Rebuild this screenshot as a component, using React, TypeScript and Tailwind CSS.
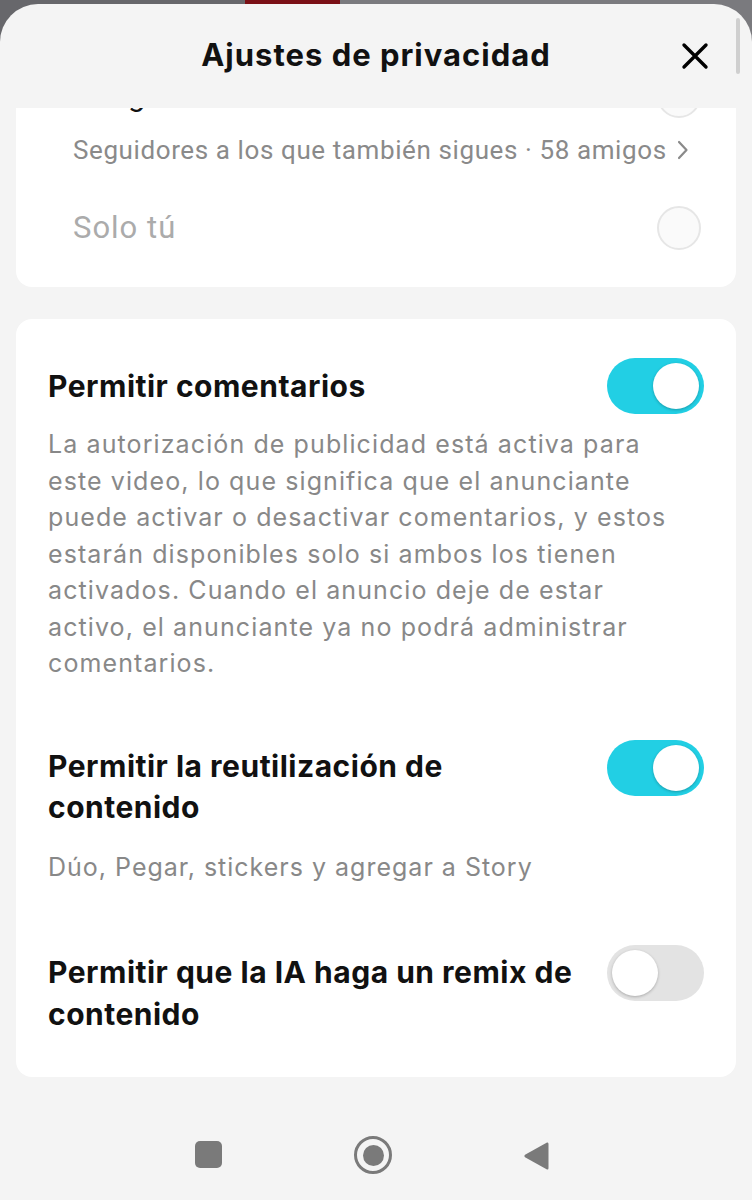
import React from "react";

const roboto = { fontFamily: "Roboto, 'Noto Sans', sans-serif" };
const inter = { fontFamily: "Inter, 'Noto Sans', sans-serif" };

function Toggle({ on }: { on: boolean }) {
  return (
    <div
      className={`shrink-0 w-[97px] h-[56px] rounded-full flex items-center px-[5px] ${
        on ? "bg-[#22cfe4] justify-end" : "bg-[#e3e3e3] justify-start"
      }`}
    >
      <div className="w-[46px] h-[46px] rounded-full bg-white shadow-[0_1px_3px_rgba(0,0,0,0.25)]" />
    </div>
  );
}

function Radio() {
  return (
    <div className="shrink-0 w-[44px] h-[44px] rounded-full border-[2px] border-[#e6e6e6] bg-[#fafafa]" />
  );
}

export default function App() {
  return (
    <div
      className="relative w-[752px] h-[1200px] overflow-hidden bg-[linear-gradient(90deg,#67676b_0,#67676b_245px,#7a1016_245px,#7a1016_340px,#7a7a7e_340px)]"
      style={inter}
    >
      <div className="mt-[4px] h-[1196px] rounded-t-[38px] bg-[#f4f4f4] flex flex-col overflow-hidden">
        {/* Header */}
        <div className="relative shrink-0 h-[104px] flex items-center justify-center">
          <h1 className="text-[31px] font-bold text-[#111] tracking-[1px] mt-[-2px]" style={inter}>
            Ajustes de privacidad
          </h1>
          <button className="absolute right-[42px] top-[37px] w-[30px] h-[30px] flex items-center justify-center">
            <svg width="28" height="28" viewBox="0 0 28 28">
              <path d="M3 3 L25 25 M25 3 L3 25" stroke="#000" strokeWidth="3.4" strokeLinecap="round" />
            </svg>
          </button>
        </div>

        {/* Scrolling content */}
        <div className="flex-1 overflow-hidden">
          <div className="mt-[-68px] px-[16px] flex flex-col">
            {/* Card 1 */}
            <div className="bg-white rounded-[16px] pt-[28px] pb-[31px] pl-[57px] pr-[35px]" style={roboto}>
              <div className="h-[56px] flex items-center justify-between">
                <span className="text-[31px] text-[#111]">Amigos</span>
                <Radio />
              </div>
              <div className="mt-[10px] h-[32px] flex items-center text-[26px] tracking-[0.6px] text-[#8a8a8a] leading-[32px] whitespace-nowrap">
                <span>Seguidores a los que también sigues · 58 amigos</span>
                <svg className="ml-[10px]" width="12" height="20" viewBox="0 0 12 20">
                  <path d="M2 2 L9.5 10 L2 18" fill="none" stroke="#8a8a8a" strokeWidth="2.2" strokeLinecap="round" strokeLinejoin="round" />
                </svg>
              </div>
              <div className="mt-[34px] h-[56px] flex items-center justify-between">
                <span className="text-[31px] tracking-[1px] text-[#ababab]">Solo tú</span>
                <Radio />
              </div>
            </div>

            {/* Card 2 */}
            <div className="mt-[32px] bg-white rounded-[16px] pt-[39px] pb-[42px] px-[32px]">
              <div className="flex items-center justify-between gap-[24px]">
                <span className="text-[30px] font-bold text-[#111] leading-[41px] tracking-[0.5px]">
                  Permitir comentarios
                </span>
                <Toggle on />
              </div>
              <p className="mt-[12px] text-[25px] leading-[36.5px] text-[#888888] tracking-[1.1px] whitespace-nowrap">
                La autorización de publicidad está activa para
                <br />
                este video, lo que significa que el anunciante
                <br />
                puede activar o desactivar comentarios, y estos
                <br />
                estarán disponibles solo si ambos los tienen
                <br />
                activados. Cuando el anuncio deje de estar
                <br />
                activo, el anunciante ya no podrá administrar
                <br />
                comentarios.
              </p>

              <div className="mt-[58px] flex items-start justify-between gap-[24px]">
                <span className="pt-[6px] text-[30px] font-bold text-[#111] leading-[41px] tracking-[0.5px] whitespace-nowrap">
                  Permitir la reutilización de
                  <br />
                  contenido
                </span>
                <Toggle on />
              </div>
              <p className="mt-[21px] text-[25px] leading-[36px] text-[#888888] tracking-[1px]">
                Dúo, Pegar, stickers y agregar a Story
              </p>

              <div className="mt-[60px] flex items-start justify-between gap-[20px]">
                <span className="pt-[6px] text-[30px] font-bold text-[#111] leading-[42px] tracking-[0.5px] whitespace-nowrap">
                  Permitir que la IA haga un remix de
                  <br />
                  contenido
                </span>
                <Toggle on={false} />
              </div>
            </div>

            {/* Nav bar */}
            <div className="mt-[41px] h-[75px] flex items-center">
              <div className="w-full relative h-[40px] flex items-center">
                <div className="absolute left-[179px] top-[6px] w-[27px] h-[27px] rounded-[5px] bg-[#7a7a7a]" />
                <div className="absolute left-[338px] top-[1px] w-[38px] h-[38px] rounded-full border-[3.5px] border-[#7a7a7a] flex items-center justify-center">
                  <div className="w-[21px] h-[21px] rounded-full bg-[#7a7a7a]" />
                </div>
                <svg className="absolute left-[506px] top-[5px]" width="28" height="32" viewBox="0 0 28 32">
                  <path d="M25 2.5 Q26.5 2 26.5 4 L26.5 28 Q26.5 30 25 29.5 L3 17.3 Q1.5 16 3 14.7 Z" fill="#7a7a7a" />
                </svg>
              </div>
            </div>
          </div>
        </div>
      </div>

      {/* scrollbar */}
      <div className="absolute right-[12px] top-[18px] w-[4px] h-[56px] rounded-full bg-[#cfcfcf]" />
    </div>
  );
}
